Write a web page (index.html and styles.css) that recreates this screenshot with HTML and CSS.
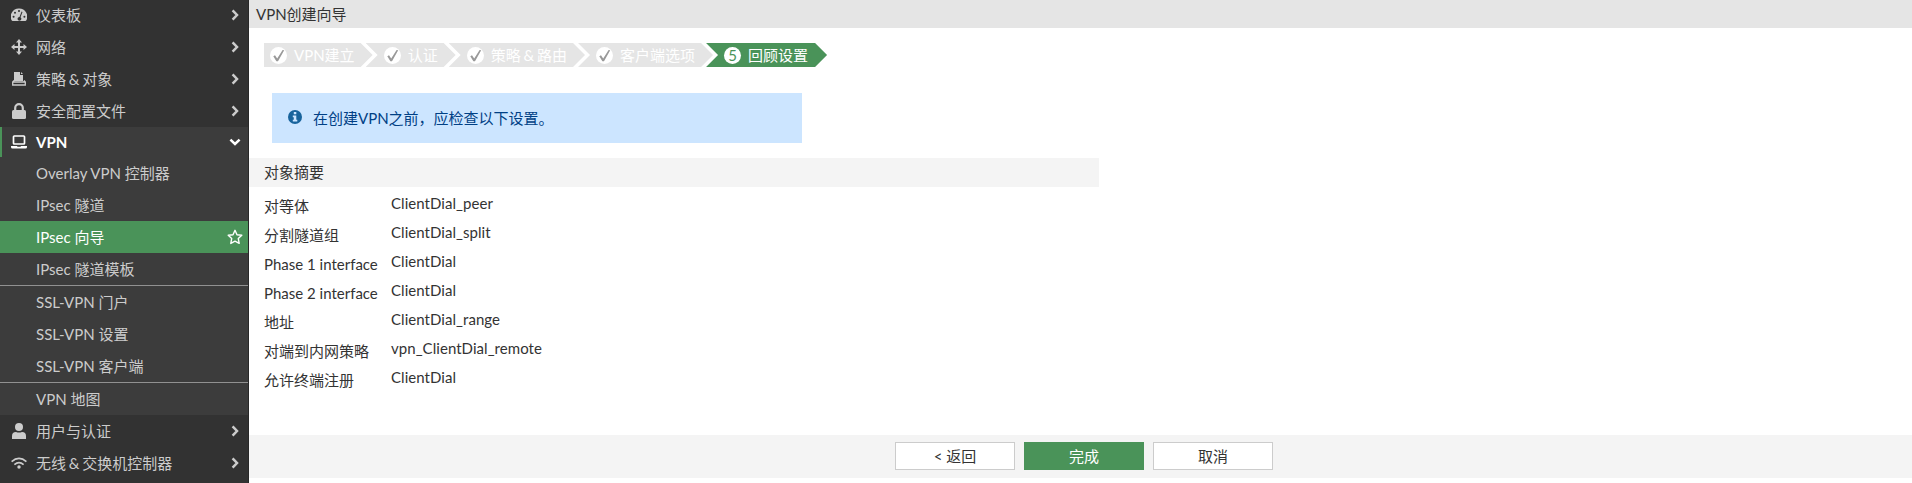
FILE: index.html
```html
<!DOCTYPE html>
<html lang="zh-CN">
<head>
<meta charset="utf-8">
<title>VPN创建向导</title>
<link rel="stylesheet" href="styles.css">
</head>
<body>
<svg class="defs" width="0" height="0">
  <symbol id="right" viewBox="0 0 8 12"><path d="M1.6 1.4 6 6l-4.400 4.600" fill="none" stroke="currentColor" stroke-width="2.500"/></symbol>
  <symbol id="tick" viewBox="0 0 17 17"><circle cx="8.500" cy="8.500" r="8.500" fill="#fff"/><path d="M3.300 9.300 5 8.200 7.200 11.500 12.600 3l1.600.3-6.200 11H6.400z" fill="#999"/></symbol>
</svg>
<div class="app">
  <nav class="sidebar">
    <a class="item"><svg class="icon" viewBox="0 0 16 16"><path fill="currentColor" fill-rule="evenodd" d="M8 1.500a8 8 0 0 0-7.200 12l.7.500h13l.7-.5A8 8 0 0 0 8 1.500zM8 3a1 1 0 1 1 0 2 1 1 0 0 1 0-2zM4 4.800a1 1 0 1 1 0 2 1 1 0 0 1 0-2zM2.600 8.800a1 1 0 1 1 0 2 1 1 0 0 1 0-2zm10.800 0a1 1 0 1 1 0 2 1 1 0 0 1 0-2zM10.600 4.500l.9.400-2 5.300a1.900 1.900 0 1 1-1-.3z"/></svg><span class="label">仪表板</span><svg class="arrow"><use href="#right"/></svg></a>
    <a class="item"><svg class="icon" viewBox="0 0 16 16"><path fill="currentColor" d="M8 0l3 3.500H9V7h3.500V5L16 8l-3.500 3V9H9v3.500h2L8 16l-3-3.500h2V9H3.500v2L0 8l3.500-3v2H7V3.500H5z"/></svg><span class="label">网络</span><svg class="arrow"><use href="#right"/></svg></a>
    <a class="item"><svg class="icon" viewBox="0 0 16 16"><path fill="currentColor" d="M3 1h6v3h3v6H3z"/><path fill="currentColor" d="M10 1l2 2h-2z"/><path d="M3 9.500 1.700 11v3h12.600v-3L13 9.500M2 11h12" fill="none" stroke="currentColor" stroke-width="1.300"/></svg><span class="label">策略 &amp; 对象</span><svg class="arrow"><use href="#right"/></svg></a>
    <a class="item"><svg class="icon" viewBox="0 0 16 16"><rect x="1" y="7" width="14" height="9" rx="1.500" fill="currentColor"/><path d="M4.200 8V5a3.800 3.800 0 0 1 7.600 0v3" fill="none" stroke="currentColor" stroke-width="2.200"/></svg><span class="label">安全配置文件</span><svg class="arrow"><use href="#right"/></svg></a>
    <a class="item open"><svg class="icon" viewBox="0 0 16 16"><rect x="2.500" y="2" width="11" height="8" rx=".8" fill="none" stroke="currentColor" stroke-width="1.700"/><path fill="currentColor" d="M0 12h6l.5.700h3L10 12h6v1q0 1.500-1.500 1.500h-13Q0 14.500 0 13z"/></svg><span class="label">VPN</span><svg class="arrow down" viewBox="0 0 12 8"><path d="M1.400 1.600 6 6l4.600-4.400" fill="none" stroke="currentColor" stroke-width="2.500"/></svg></a>
    <div class="submenu">
      <a class="sub">Overlay VPN 控制器</a>
      <a class="sub">IPsec 隧道</a>
      <a class="sub current"><span>IPsec 向导</span><svg class="star" viewBox="0 0 16 16"><path d="M8 1.300l2 4.400 4.800.6-3.500 3.300.9 4.800L8 12.100l-4.200 2.300.9-4.800L1.200 6.300 6 5.700z" fill="none" stroke="currentColor" stroke-width="1.400" stroke-linejoin="round"/></svg></a>
      <a class="sub">IPsec 隧道模板</a>
      <a class="sub ruled">SSL-VPN 门户</a>
      <a class="sub">SSL-VPN 设置</a>
      <a class="sub">SSL-VPN 客户端</a>
      <a class="sub ruled">VPN 地图</a>
    </div>
    <a class="item"><svg class="icon" viewBox="0 0 16 16"><ellipse cx="8" cy="4" rx="4" ry="4" fill="currentColor"/><path fill="currentColor" d="M1 16v-3q0-4 4-4 3 1.200 6 0 4 0 4 4v3z"/></svg><span class="label">用户与认证</span><svg class="arrow"><use href="#right"/></svg></a>
    <a class="item"><svg class="icon" viewBox="0 0 16 16"><path d="M.6 6.600q7.400-6.400 14.800 0M3.400 9.600q4.600-3.800 9.200 0" fill="none" stroke="currentColor" stroke-width="1.700"/><circle cx="8" cy="12" r="1.700" fill="currentColor"/></svg><span class="label">无线 &amp; 交换机控制器</span><svg class="arrow"><use href="#right"/></svg></a>
  </nav>
  <main class="main">
    <header class="title">VPN创建向导</header>
    <div class="steps">
      <div class="step first"><svg class="mark"><use href="#tick"/></svg><span>VPN建立</span></div>
      <div class="step"><svg class="mark"><use href="#tick"/></svg><span>认证</span></div>
      <div class="step"><svg class="mark"><use href="#tick"/></svg><span>策略 &amp; 路由</span></div>
      <div class="step"><svg class="mark"><use href="#tick"/></svg><span>客户端选项</span></div>
      <div class="step active"><b class="mark num">5</b><span>回顾设置</span></div>
    </div>
    <div class="notice"><svg class="info" viewBox="0 0 14 14"><circle cx="7" cy="7" r="7" fill="#17639c"/><path fill="#cce5ff" d="M5.800 2h2.500v2.200H5.800zM4.800 5.500h3.500v4.300h1v1.700H4.800V9.800h1V7.200h-1z"/></svg><span>在创建VPN之前，应检查以下设置。</span></div>
    <h2 class="section">对象摘要</h2>
    <dl class="summary">
      <dt>对等体</dt><dd>ClientDial_peer</dd>
      <dt>分割隧道组</dt><dd>ClientDial_split</dd>
      <dt>Phase 1 interface</dt><dd>ClientDial</dd>
      <dt>Phase 2 interface</dt><dd>ClientDial</dd>
      <dt>地址</dt><dd>ClientDial_range</dd>
      <dt>对端到内网策略</dt><dd>vpn_ClientDial_remote</dd>
      <dt>允许终端注册</dt><dd>ClientDial</dd>
    </dl>
    <footer class="footer">
      <button class="btn">&lt; 返回</button>
      <button class="btn primary">完成</button>
      <button class="btn">取消</button>
    </footer>
  </main>
</div>
</body>
</html>
```
FILE: styles.css
```css
* { box-sizing: border-box; }
body { margin: 0; background: #fff; color: #333; font: 15px/20px Lato, "Noto Sans CJK SC", sans-serif; overflow: hidden; }
.defs { display: none; }
.app { display: flex; height: 483px; }

.sidebar { width: 249px; flex: none; background: #323232; border-right: 1px solid #282828; color: #ccc; overflow: hidden; }
.item { display: flex; align-items: center; height: 32px; padding: 0 9px 0 11px; white-space: nowrap; }
.item:first-child { height: 31px; padding-bottom: 1px; }
.icon { width: 16px; height: 16px; flex: none; margin-right: 9px; }
.label { flex: 1; word-spacing: -1px; }
.arrow { width: 8px; height: 12px; }
.arrow.down { width: 12px; height: 8px; margin-right: -2px; }
.item.open { height: 30px; background: #3c3c3c; color: #fff; font-weight: bold; border-left: 2px solid #4a9359; padding-left: 9px; }
.submenu { background: #3c3c3c; }
.sub { display: flex; align-items: center; justify-content: space-between; height: 32px; padding: 0 5px 0 36px; }
.sub.current { background: #4a9359; color: #fff; }
.sub.ruled { height: 33px; border-top: 1px solid #919191; }
.star { width: 16px; height: 16px; }

.main { flex: 1; display: flex; flex-direction: column; }
.title { height: 28px; padding: 4px 7px; background: #e5e5e5; }
.steps { display: flex; margin: 15px 0 0 15px; word-spacing: -1px; }
.step { display: flex; align-items: center; height: 24px; margin-left: -7px; padding: 0 18px; background: #e5e5e5; color: #fff; clip-path: polygon(0 0, calc(100% - 12px) 0, 100% 50%, calc(100% - 12px) 100%, 0 100%, 12px 50%); }
.step.first { margin-left: 0; padding-left: 6px; clip-path: polygon(0 0, calc(100% - 12px) 0, 100% 50%, calc(100% - 12px) 100%, 0 100%); }
.step.active { background: #4a9359; padding-right: 19px; }
.mark { width: 17px; height: 17px; margin-right: 7px; }
.num { border-radius: 50%; background: #fff; color: #4a9359; font-weight: normal; line-height: 17px; text-align: center; }
.notice { display: flex; align-items: center; width: 530px; height: 50px; margin: 26px 0 0 23px; padding-left: 16px; background: #cce5ff; color: #004085; }
.info { width: 14px; height: 14px; margin: -2px 11px 0 0; }
.section { width: 850px; height: 29px; margin: 15px 0 0; padding: 4px 15px; background: #f4f4f4; font-size: 15px; font-weight: normal; line-height: 20px; }
.summary { display: grid; grid-template-columns: 127px 1fr; grid-auto-rows: 29px; margin: 6px 0 0 15px; }
.summary dt { padding-top: 3px; }
.summary dd { margin: 0; letter-spacing: 0.05px; }
.footer { display: flex; justify-content: center; gap: 9px; height: 43px; margin-top: auto; margin-bottom: 5px; padding: 7px 0 0 7px; background: #f4f4f4; }
.btn { width: 120px; height: 28px; padding: 0; border: 1px solid #ccc; background: #fff; color: #333; font: inherit; }
.btn.primary { border-color: #4a9359; background: #4a9359; color: #fff; }
```
